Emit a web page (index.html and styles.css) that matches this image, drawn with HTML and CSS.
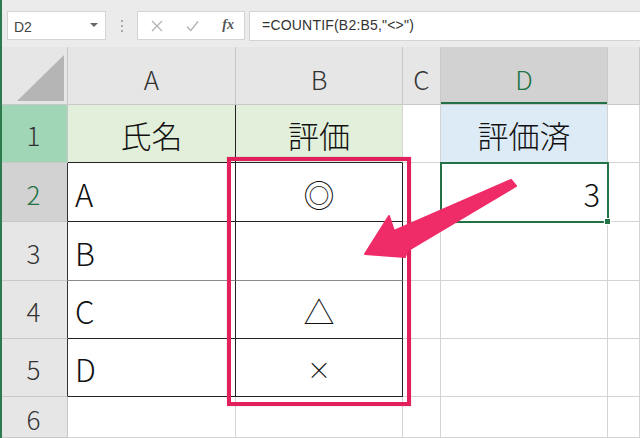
FILE: index.html
```html
<!DOCTYPE html>
<html lang="ja">

<head>
    <meta charset="UTF-8">
    <title>COUNTIF</title>
    <link rel="stylesheet" href="styles.css">
</head>

<body>
    <div class="app">
        <div class="toolbar">
            <div class="namebox">
                <span>D2</span>
                <span class="caret"></span>
            </div>
            <div class="grip"><i></i><i></i><i></i></div>
            <div class="fbtns">
                <svg class="btn" width="12" height="12" viewBox="0 0 12 12">
                    <path d="M1 1 L11 11 M11 1 L1 11" stroke="#b3b3b3" stroke-width="1.3" fill="none" />
                </svg>
                <svg class="btn" width="13" height="12" viewBox="0 0 13 12">
                    <path d="M1 6.5 L4.8 10.5 L12 1.5" stroke="#b3b3b3" stroke-width="1.3" fill="none" />
                </svg>
                <span class="fx">fx</span>
            </div>
            <div class="formula">=COUNTIF(B2:B5,"&lt;&gt;")</div>
        </div>

        <div class="sheet">
            <!-- column headers -->
            <div class="h corner"><div class="tri"></div></div>
            <div class="h">A</div>
            <div class="h">B</div>
            <div class="h">C</div>
            <div class="h active-col">D</div>
            <div class="h"></div>

            <!-- row 1 -->
            <div class="rh row-one">1</div>
            <div class="c fill-green mid dark-right dark-bottom">氏名</div>
            <div class="c fill-green mid dark-bottom">評価</div>
            <div class="c"></div>
            <div class="c fill-blue mid">評価済</div>
            <div class="c"></div>

            <!-- row 2 -->
            <div class="rh active-row edge">2</div>
            <div class="c dark-right dark-bottom">A</div>
            <div class="c mid dark-right dark-bottom">◎</div>
            <div class="c"></div>
            <div class="c num sel">3</div>
            <div class="c"></div>

            <!-- row 3 -->
            <div class="rh edge">3</div>
            <div class="c dark-right soft-bottom">B</div>
            <div class="c mid dark-right soft-bottom"></div>
            <div class="c"></div>
            <div class="c"></div>
            <div class="c"></div>

            <!-- row 4 -->
            <div class="rh edge">4</div>
            <div class="c dark-right dark-bottom">C</div>
            <div class="c mid dark-right dark-bottom">△</div>
            <div class="c"></div>
            <div class="c"></div>
            <div class="c"></div>

            <!-- row 5 -->
            <div class="rh edge">5</div>
            <div class="c dark-right dark-bottom">D</div>
            <div class="c mid dark-right dark-bottom cross">×</div>
            <div class="c"></div>
            <div class="c"></div>
            <div class="c"></div>

            <!-- row 6 -->
            <div class="rh">6</div>
            <div class="c"></div>
            <div class="c"></div>
            <div class="c"></div>
            <div class="c"></div>
            <div class="c"></div>
        </div>

        <!-- callout box and arrow drawn on top of the sheet -->
        <div class="highlight"></div>
        <svg class="arrow" width="640" height="438" viewBox="0 0 640 438">
            <polygon points="511,180 516,186 407,251 405,257 365,254 389,216 394,231"
                fill="#ef2b68" stroke="#ef2b68" stroke-width="2" stroke-linejoin="round" />
        </svg>
    </div>
</body>

</html>
```

FILE: styles.css
```css
body {
    margin: 0;
    background-color: #fff;
    font-family: "Noto Sans CJK JP", "Noto Sans", sans-serif;
    color: #222;
}

.app {
    position: relative;
    width: 640px;
    height: 438px;
    overflow: hidden;
}

/* thin green edge of the window */
.app:before {
    content: '';
    position: absolute;
    left: 0;
    top: 0;
    bottom: 0;
    width: 2px;
    background-color: #2e7a4e;
    z-index: 3;
}

/* formula bar */
.toolbar {
    height: 47px;
    box-sizing: border-box;
    padding: 11px 0 0 7px;
    display: flex;
    align-items: flex-start;
    background-color: #ebebeb;
    font-family: "Liberation Sans", Arial, sans-serif;
}

.namebox {
    width: 99px;
    height: 29px;
    box-sizing: border-box;
    background-color: #fff;
    border: 1px solid #d4d4d4;
    display: flex;
    align-items: center;
    justify-content: space-between;
    padding: 2px 7px 0 6px;
    font-size: 14px;
    color: #444;
}

.caret {
    width: 0;
    height: 0;
    border-left: 4px solid transparent;
    border-right: 4px solid transparent;
    border-top: 4px solid #666;
    margin-bottom: 4px;
}

.grip {
    width: 31px;
    height: 29px;
    display: flex;
    flex-direction: column;
    align-items: center;
    justify-content: center;
    gap: 3px;
}

.grip i {
    width: 2px;
    height: 2px;
    background-color: #a8a8a8;
}

.fbtns {
    width: 108px;
    height: 29px;
    box-sizing: border-box;
    background-color: #fff;
    border: 1px solid #d4d4d4;
    display: flex;
    align-items: center;
    padding: 0 10px 0 13px;
    justify-content: space-between;
}

.fx {
    font-family: "Liberation Serif", serif;
    font-style: italic;
    font-weight: bold;
    font-size: 14px;
    color: #555;
    margin-bottom: 2px;
}

.formula {
    flex: 1;
    height: 30px;
    box-sizing: border-box;
    margin-left: 4px;
    background-color: #fff;
    border: 1px solid #d4d4d4;
    border-right: none;
    padding: 5px 0 0 12px;
    font-size: 14px;
    letter-spacing: 0.2px;
    color: #333;
}

/* the grid */
.sheet {
    display: grid;
    grid-template-columns: 68px 168px 167px 38px 167px 1fr;
    grid-template-rows: 58px 58px 59px 59px 58px 58px 1fr;
    height: 391px;
    font-weight: 300;
}

.sheet > div {
    box-sizing: border-box;
    border-right: 1px solid #d4d4d4;
    border-bottom: 1px solid #d4d4d4;
}

.h {
    background-color: #e6e6e6;
    border-color: #c8c8c8 !important;
    display: flex;
    justify-content: center;
    align-items: center;
    padding-top: 6px;
    font-size: 26px;
    color: #333;
}

.corner {
    align-items: flex-end;
    justify-content: flex-end;
    padding: 0 3px 3px 0;
}

.tri {
    width: 47px;
    height: 46px;
    background-color: #b5b5b5;
    clip-path: polygon(100% 0, 100% 100%, 0 100%);
}

.active-col {
    background-color: #d2d2d2;
    color: #217346;
    box-shadow: inset 0 -2px #217346;
}

.rh {
    background-color: #e6e6e6;
    border-color: #c8c8c8 !important;
    display: flex;
    justify-content: center;
    align-items: center;
    padding-top: 2px;
    font-size: 26px;
    color: #333;
}

.rh.edge {
    border-right-color: #333 !important;
}

.row-one {
    background-color: #a0d5b6;
}

.active-row {
    background-color: #d2d2d2;
    color: #217346;
}

.c {
    display: flex;
    align-items: center;
    padding: 2px 7px 0 7px;
    font-size: 31px;
    line-height: 1;
    color: #111;
}

.mid {
    justify-content: center;
}

.num {
    justify-content: flex-end;
}

.fill-green {
    background-color: #e2efda;
}

.fill-blue {
    background-color: #ddebf7;
}

.dark-right {
    border-right-color: #222 !important;
}

.dark-bottom {
    border-bottom-color: #222 !important;
}

.soft-bottom {
    border-bottom-color: #8a8a8a !important;
}

.cross {
    font-size: 24px;
}

.sel {
    position: relative;
    outline: 2px solid #217346;
    outline-offset: -1px;
}

.sel:after {
    content: '';
    position: absolute;
    right: -4px;
    bottom: -4px;
    width: 5px;
    height: 5px;
    background-color: #217346;
    border: 1px solid #fff;
}

/* callout */
.highlight {
    position: absolute;
    left: 227px;
    top: 157px;
    width: 184px;
    height: 249px;
    box-sizing: border-box;
    border: 4px solid #e2215c;
    box-shadow: 0 0 1px rgba(120, 0, 30, 0.4);
}

.arrow {
    position: absolute;
    left: 0;
    top: 0;
    pointer-events: none;
}
```
